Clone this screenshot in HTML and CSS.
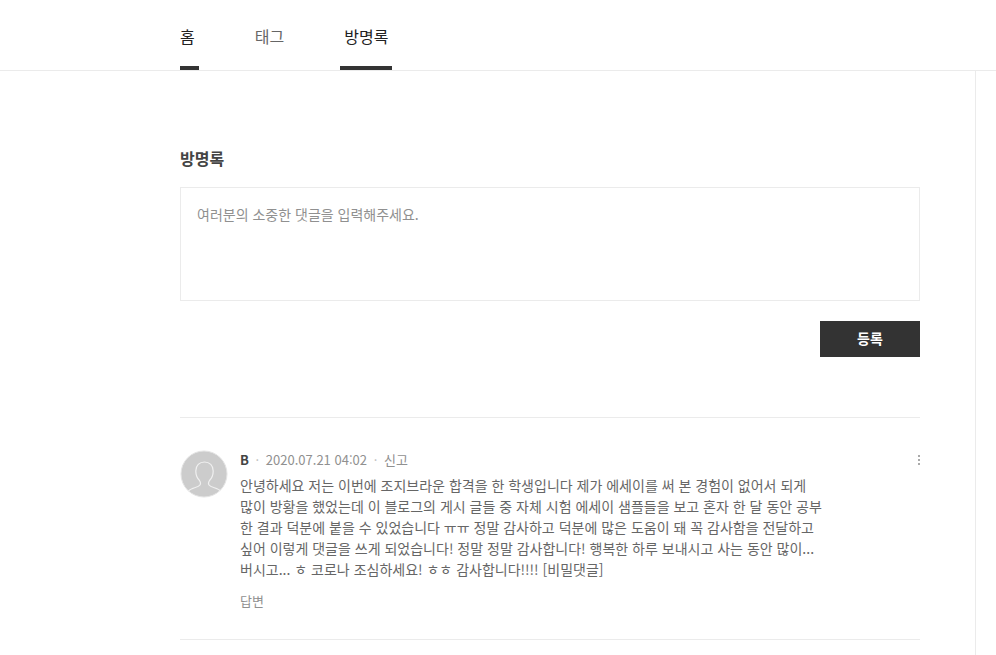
FILE: index.html
```html
<!DOCTYPE html>
<html lang="ko">
<head>
  <meta charset="UTF-8" />
  <meta name="viewport" content="width=device-width, initial-scale=1.0"/>
  <title>방명록</title>
  <link rel="stylesheet" href="styles.css">
</head>
<body>

<header class="header">
  <nav class="menu">
    <a href="#" class="on home">홈</a>
    <a href="#">태그</a>
    <a href="#" class="on">방명록</a>
  </nav>
</header>

<div class="page">
  <main class="content">
    <h2><label for="comment">방명록</label></h2>

    <form class="write">
      <textarea id="comment" placeholder="여러분의 소중한 댓글을 입력해주세요."></textarea>
      <button type="submit">등록</button>
    </form>

    <ul class="comments">
      <li>
        <svg class="avatar" viewBox="0 0 48 48" aria-hidden="true">
          <circle cx="24" cy="24" r="23" fill="#ccc" stroke="#e4e4e4"/>
          <path d="M8.500 41c2.500-3.500 9.500-3 11.500-6 1-1.500.5-3-.5-4.500C17 28 15.800 25 15.800 21c0-5.500 3.600-9 8.700-9s8.700 3.500 8.700 9c0 4-1.200 7-3.700 9.500-1 1.500-1.500 3-.5 4.500 2 3 9 2.500 11.500 6" fill="none" stroke="#f0f0f0" stroke-width="1.200"/>
        </svg>
        <div class="body">
          <div class="meta">
            <strong>B</strong>
            <span class="dot">·</span>
            <time datetime="2020-07-21T04:02">2020.07.21 04:02</time>
            <span class="dot">·</span>
            <a href="#">신고</a>
          </div>
          <p>
            안녕하세요 저는 이번에 조지브라운 합격을 한 학생입니다 제가 에세이를 써 본 경험이 없어서 되게<br>
            많이 방황을 했었는데 이 블로그의 게시 글들 중 자체 시험 에세이 샘플들을 보고 혼자 한 달 동안 공부<br>
            한 결과 덕분에 붙을 수 있었습니다 ㅠㅠ 정말 감사하고 덕분에 많은 도움이 돼 꼭 감사함을 전달하고<br>
            싶어 이렇게 댓글을 쓰게 되었습니다! 정말 정말 감사합니다! 행복한 하루 보내시고 사는 동안 많이...<br>
            버시고... ㅎ 코로나 조심하세요! ㅎㅎ 감사합니다!!!! [비밀댓글]
          </p>
          <a href="#" class="reply">답변</a>
        </div>
        <button type="button" class="more" aria-label="더보기">
          <svg viewBox="0 0 4 12" aria-hidden="true">
            <path d="M2 1h2v2H2zM2 5h2v2H2zM2 9h2v2H2z" fill="#aaa"/>
          </svg>
        </button>
      </li>
    </ul>
  </main>
</div>

</body>
</html>
```
FILE: styles.css
```css
* {
  box-sizing: border-box;
}

body {
  margin: 0;
  font-family: 'Noto Sans CJK KR', sans-serif;
  background: #fff;
  color: #666;
}

a {
  color: inherit;
  text-decoration: none;
}

.header {
  padding-left: 180px;
  border-bottom: 1px solid #ebebeb;
}

.menu {
  display: flex;
  gap: 52px;
}

.menu a {
  height: 70px;
  padding: 0 4px;
  border-bottom: 4px solid transparent;
  font-size: 16px;
  line-height: 72px;
}

.menu .on {
  border-color: #333;
  color: #222;
}

.menu .home {
  padding-left: 0;
}

.page {
  min-height: calc(100vh - 71px);
  margin-right: 20px;
  padding: 75px 55px 0 180px;
  border-right: 1px solid #ebebeb;
}

h2 {
  margin: 0 0 17px;
  font-size: 16px;
  line-height: 24px;
  color: #444;
}

.write {
  display: flex;
  flex-direction: column;
}

.write textarea {
  height: 114px;
  padding: 16px;
  border: 1px solid #ebebeb;
  resize: none;
  font: 14px/20px 'Noto Sans CJK KR', sans-serif;
}

.write textarea::placeholder {
  color: #909090;
}

.write button {
  align-self: flex-end;
  width: 100px;
  height: 36px;
  margin-top: 20px;
  padding: 0 0 2px;
  border: 0;
  background: #333;
  color: #fff;
  font: bold 14px/20px 'Noto Sans CJK KR', sans-serif;
}

.comments {
  margin: 60px 0 0;
  padding: 0;
  border-top: 1px solid #ebebeb;
  list-style: none;
}

.comments li {
  display: flex;
  gap: 12px;
  padding: 32px 0 28px;
  border-bottom: 1px solid #ebebeb;
}

.avatar {
  flex: none;
  width: 48px;
  height: 48px;
}

.body {
  flex: 1;
}

.meta {
  display: flex;
  font-size: 13px;
  line-height: 20px;
  color: #909090;
}

.meta strong {
  color: #444;
}

.dot {
  width: 17px;
  text-align: center;
  color: #bbb;
}

.body p {
  margin: 5px 0 11px;
  font-size: 14px;
  line-height: 21px;
  white-space: nowrap;
}

.reply {
  display: block;
  font-size: 13px;
  line-height: 20px;
  color: #909090;
}

.more {
  align-self: flex-start;
  width: 4px;
  height: 20px;
  padding: 0;
  border: 0;
  background: none;
}

.more svg {
  display: block;
  width: 4px;
  height: 12px;
}
```
